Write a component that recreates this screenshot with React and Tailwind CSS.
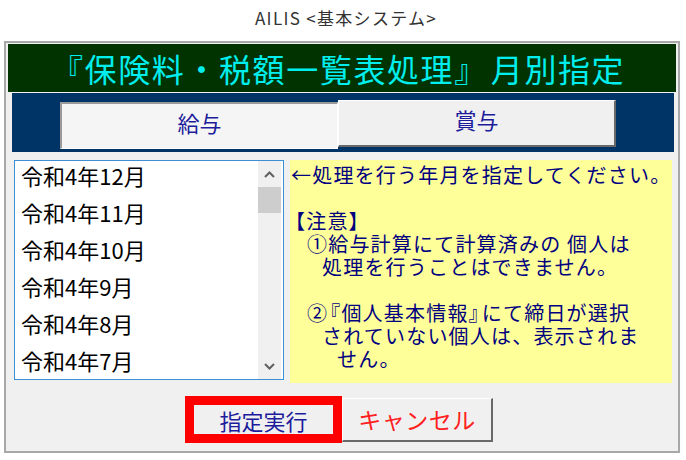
import React from "react";

const JP = { fontFamily: '"Noto Sans CJK JP", "Noto Sans", sans-serif' };

function Chevron({ up }) {
  return (
    <svg width="11" height="7" viewBox="0 0 11 7">
      <path
        d={up ? "M1 6 L5.5 1.5 L10 6" : "M1 1 L5.5 5.5 L10 1"}
        fill="none"
        stroke="#606060"
        strokeWidth="2"
      />
    </svg>
  );
}

export default function App() {
  const months = ["令和4年12月", "令和4年11月", "令和4年10月", "令和4年9月", "令和4年8月", "令和4年7月"];
  return (
    <div className="w-[686px] h-[460px] bg-white overflow-hidden" style={JP}>
      <div className="h-[41px] flex items-center justify-center pb-[6px] pl-[6px] text-[17px] tracking-[1.3px] text-[#333333]">
        AILIS &lt;基本システム&gt;
      </div>
      <div className="ml-[4px] w-[676px] h-[412px] border-2 border-[#a8a8a8] bg-[#f0f0f0] pt-[1px] px-[2px] flex flex-col">
        <div className="h-[48px] bg-[#003300] text-[#00eeee] text-[32px] tracking-[1.6px] leading-none flex items-center pl-[43px] whitespace-nowrap">
          <span>『保険料・税額一覧表処理』</span>
          <span className="ml-[3px]">月別指定</span>
        </div>
        <div className="mt-[1px] ml-[4px] mr-[2px] h-[59px] bg-[#003366] flex items-start pl-[48px]">
          <div className="mt-[9px] w-[278px] h-[47px] bg-[#f5f5f5] border-t-2 border-l-2 border-t-[#9a9a9a] border-l-[#9a9a9a] border-b border-r border-b-white border-r-white flex items-center justify-center text-[22px] leading-none text-[#1c1c9c] pb-[9px]">
            給与
          </div>
          <div className="mt-[7px] w-[278px] h-[47px] bg-[#f0f0f0] border-t border-l border-t-white border-l-white border-b-2 border-r-2 border-b-[#696969] border-r-[#696969] flex items-center justify-center text-[22px] leading-none text-[#1c1c9c] pb-[8px]">
            賞与
          </div>
        </div>
        <div className="mt-[8px] flex items-start">
          <div className="ml-[6px] w-[270px] h-[220px] border border-[#3c8fd6] bg-white flex overflow-hidden">
            <div className="flex-1 flex flex-col">
              {months.map((m) => (
                <div key={m} className="h-[37px] shrink-0 flex items-center pl-[6px] pb-[9px] text-[22px] text-black leading-none">
                  {m}
                </div>
              ))}
            </div>
            <div className="w-[23px] mr-[2px] bg-[#f0f0f0] flex flex-col">
              <div className="h-[26px] flex items-center justify-center">
                <Chevron up />
              </div>
              <div className="h-[26px] bg-[#cdcdcd]" />
              <div className="flex-1" />
              <div className="h-[26px] flex items-center justify-center">
                <Chevron />
              </div>
            </div>
          </div>
          <div className="ml-[6px] w-[382px] h-[223px] bg-[#ffff99] pt-[3px] text-[20px] leading-[23px] tracking-[1.2px] text-[#000080] whitespace-nowrap">
            <div className="pl-[1px]">←処理を行う年月を指定してください。</div>
            <div className="h-[23px]" />
            <div>
              <span className="-ml-[5px]">【</span>注意】
            </div>
            <div className="pl-[17px]">①給与計算にて計算済みの 個人は</div>
            <div className="pl-[32px]">処理を行うことはできません。</div>
            <div className="h-[23px]" />
            <div className="pl-[17px]">
              ②<span className="-ml-[8px]">『</span>個人基本情報<span className="-mr-[8px]">』</span>にて締日が選択
            </div>
            <div className="pl-[32px]">されていない個人は、表示されま</div>
            <div className="pl-[47px]">せん。</div>
          </div>
        </div>
        <div className="mt-[13px] flex items-start pl-[177px]">
          <div className="w-[157px] h-[47px] border-[9px] border-[#ff0000] bg-[#f0f0f0] flex items-center justify-center text-[22px] text-[#1c1c9c] leading-none">
            指定実行
          </div>
          <div className="mt-[2px] w-[151px] h-[44px] bg-[#f0f0f0] border-t border-l border-t-white border-l-white border-b-2 border-r-2 border-b-[#696969] border-r-[#696969] flex items-center justify-center text-[23px] tracking-[0.5px] text-[#ff2020] leading-none">
            キャンセル
          </div>
        </div>
      </div>
    </div>
  );
}
